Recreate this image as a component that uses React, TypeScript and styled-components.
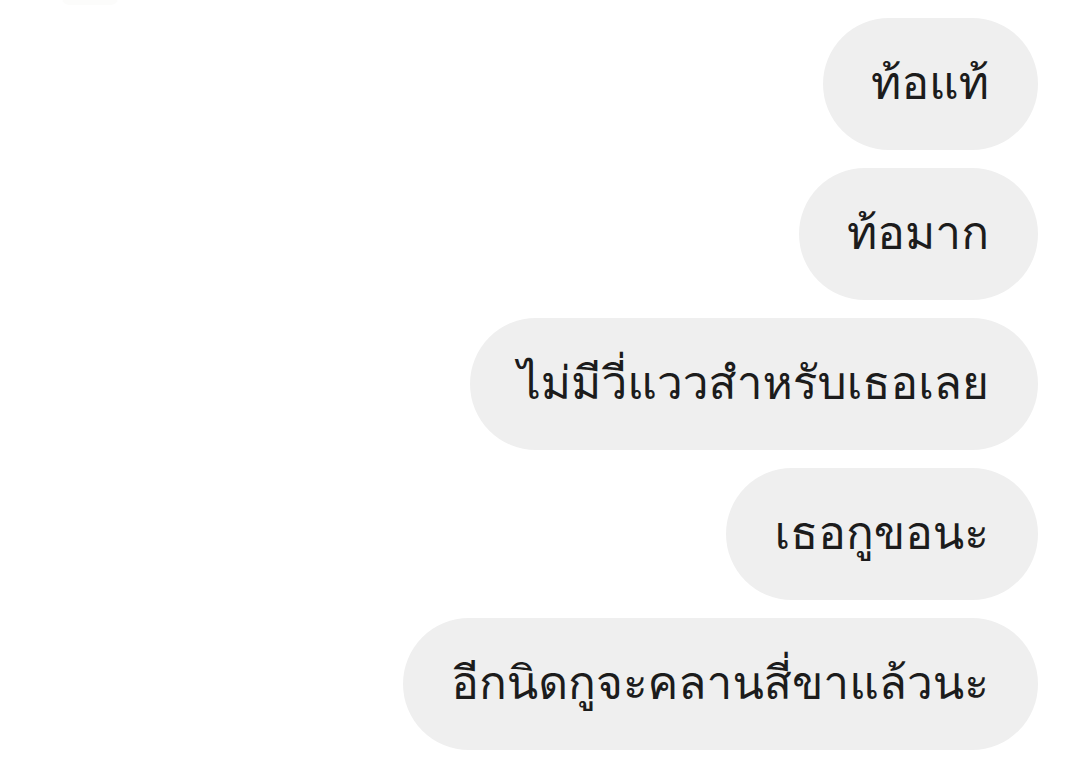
import React from "react";
import styled, { createGlobalStyle } from "styled-components";

const Global = createGlobalStyle`
  html, body { margin: 0; padding: 0; background: #ffffff; }
  body { font-family: Loma, "Noto Sans Thai", "Noto Sans", sans-serif; }
`;

const Screen = styled.div`
  position: relative;
  width: 1080px;
  height: 766px;
  box-sizing: border-box;
  padding: 18px 42px 0 0;
  display: flex;
  flex-direction: column;
  align-items: flex-end;
  gap: 18px;
  overflow: hidden;
`;

const TopHint = styled.div`
  position: absolute;
  top: -10px;
  left: 62px;
  width: 56px;
  height: 15px;
  border-radius: 8px;
  background: #fcfcfb;
`;

const Bubble = styled.div`
  height: 132px;
  box-sizing: border-box;
  padding: 0 49px 4px 48px;
  border-radius: 66px;
  background: #efefef;
  color: #1c1c1c;
  font-size: 46px;
  display: flex;
  align-items: center;
  white-space: nowrap;
`;

const messages = [
  "ท้อแท้",
  "ท้อมาก",
  "ไม่มีวี่แววสำหรับเธอเลย",
  "เธอกูขอนะ",
  "อีกนิดกูจะคลานสี่ขาแล้วนะ",
];

export default function App() {
  return (
    <>
      <Global />
      <Screen>
        <TopHint />
        {messages.map((m) => (
          <Bubble key={m}>{m}</Bubble>
        ))}
      </Screen>
    </>
  );
}
